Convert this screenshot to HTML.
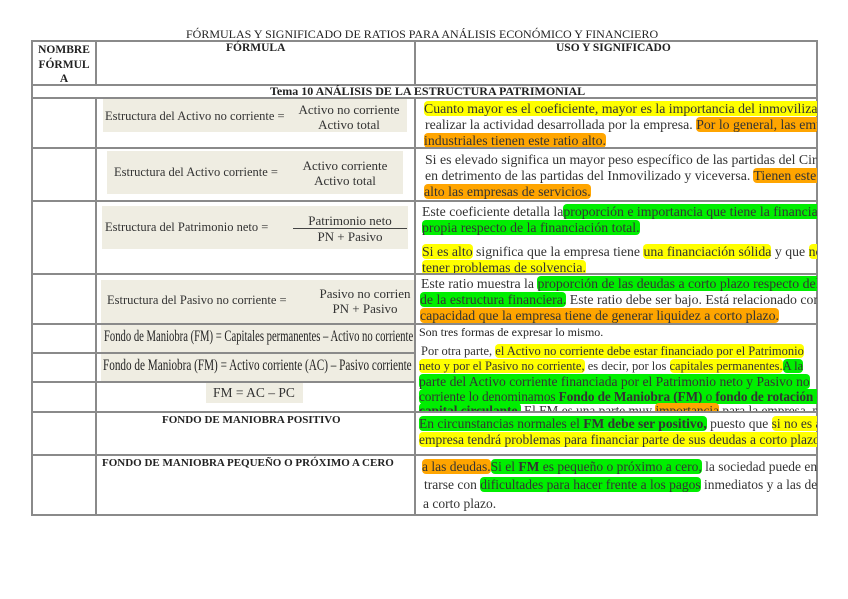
<!DOCTYPE html>
<html><head><meta charset="utf-8"><style>
body{margin:0;width:848px;height:599px;background:#fff;position:relative;overflow:hidden;font-family:"Liberation Serif",serif;color:#222}
.v{position:absolute;width:2px;background:#8a8a8a}
.h{position:absolute;height:2px;background:#8a8a8a}
.t{position:absolute;white-space:nowrap}
.clip{position:absolute;left:416px;width:401px;overflow:hidden}
.l{position:absolute;white-space:nowrap;font-size:13.8px;color:#333}
.y{background:#ffff00;border-radius:4px}
.o{background:#ffa500;border-radius:4px}
.g{background:#00ee00;border-radius:4px}
.bx{position:absolute;background:#efede2}
.f{position:absolute;font-size:12.5px;color:#333;white-space:nowrap}
.fr{position:absolute;font-size:13px;color:#333;text-align:center;white-space:nowrap;line-height:15px}
.c{font-size:16px;color:#222;transform-origin:0 0}
</style></head><body>
<div class="t" style="left:186px;top:27px;font-size:12px">FÓRMULAS Y SIGNIFICADO DE RATIOS PARA ANÁLISIS ECONÓMICO Y FINANCIERO</div>
<div class="bx" style="left:101px;top:280px;width:313px;height:101px"></div>
<div class="v" style="left:31px;top:40px;height:476px"></div>
<div class="v" style="left:95px;top:40px;height:44px"></div>
<div class="v" style="left:95px;top:98px;height:418px"></div>
<div class="v" style="left:414px;top:40px;height:44px"></div>
<div class="v" style="left:414px;top:98px;height:418px"></div>
<div class="v" style="left:816px;top:40px;height:476px"></div>
<div class="h" style="left:31px;top:40px;width:787px"></div>
<div class="h" style="left:31px;top:84px;width:787px"></div>
<div class="h" style="left:31px;top:97px;width:787px"></div>
<div class="h" style="left:31px;top:147px;width:787px"></div>
<div class="h" style="left:31px;top:200px;width:787px"></div>
<div class="h" style="left:31px;top:273px;width:787px"></div>
<div class="h" style="left:31px;top:323px;width:787px"></div>
<div class="h" style="left:31px;top:352px;width:385px"></div>
<div class="h" style="left:31px;top:381px;width:385px"></div>
<div class="h" style="left:31px;top:411px;width:787px"></div>
<div class="h" style="left:31px;top:454px;width:787px"></div>
<div class="h" style="left:31px;top:514px;width:787px"></div>
<div class="t" style="left:33px;top:43px;width:62px;text-align:center;font-size:11.5px;font-weight:bold;line-height:14.5px">NOMBRE<br>FÓRMUL<br>A</div>
<div class="t" style="left:226px;top:42px;font-size:11.5px;font-weight:bold">FÓRMULA</div>
<div class="t" style="left:556px;top:42px;font-size:11.5px;font-weight:bold">USO Y SIGNIFICADO</div>
<div class="t" style="left:270px;top:84px;font-size:12px;font-weight:bold">Tema 10 ANÁLISIS DE LA ESTRUCTURA PATRIMONIAL</div>
<div class="bx" style="left:103px;top:99px;width:304px;height:33px"></div>
<div class="f" style="left:105px;top:109px">Estructura del Activo no corriente =</div>
<div class="fr" style="left:290px;top:102px;width:118px">Activo no corriente<br>Activo total</div>
<div class="bx" style="left:107px;top:151px;width:296px;height:43px"></div>
<div class="f" style="left:114px;top:165px">Estructura del Activo corriente =</div>
<div class="fr" style="left:290px;top:158px;width:110px">Activo corriente<br>Activo total</div>
<div class="bx" style="left:102px;top:206px;width:306px;height:43px"></div>
<div class="f" style="left:105px;top:220px">Estructura del Patrimonio neto =</div>
<div class="fr" style="left:293px;top:213px;width:114px">Patrimonio neto<br><span style="display:block;border-top:1.5px solid #444">PN + Pasivo</span></div>
<div class="f" style="left:107px;top:293px">Estructura del Pasivo no corriente =</div>
<div class="fr" style="left:316px;top:286px;width:98px;overflow:hidden">Pasivo no corrien<br>PN + Pasivo</div>
<div style="position:absolute;left:101px;top:326px;width:313px;height:25px;overflow:hidden"><div class="t c" style="left:3px;top:2px;transform:scaleX(0.665)">Fondo de Maniobra (FM) = Capitales permanentes – Activo no corriente</div></div>
<div style="position:absolute;left:101px;top:355px;width:313px;height:25px;overflow:hidden"><div class="t c" style="left:2px;top:2px;transform:scaleX(0.70)">Fondo de Maniobra (FM) = Activo corriente (AC) – Pasivo corriente</div></div>
<div class="bx" style="left:206px;top:383px;width:97px;height:20px"></div>
<div class="f" style="left:213px;top:385px;font-size:13.5px">FM = AC – PC</div>
<div class="t" style="left:162px;top:414px;font-size:11px;font-weight:bold">FONDO DE MANIOBRA POSITIVO</div>
<div class="t" style="left:102px;top:457px;font-size:11px;font-weight:bold">FONDO DE MANIOBRA PEQUEÑO O PRÓXIMO A CERO</div>
<div class="clip" style="top:99px;height:48px">
<div class="l" style="left:8px;top:2px"><span class="y">Cuanto mayor es el coeficiente, mayor es la importancia del inmovilizado en</span></div>
<div class="l" style="left:9px;top:18px">realizar la actividad desarrollada por la empresa. <span class="o">Por lo general, las empresas</span></div>
<div class="l" style="left:8px;top:34px"><span class="o">industriales tienen este ratio alto.</span></div>
</div>
<div class="clip" style="top:149px;height:51px">
<div class="l" style="left:9px;top:3px">Si es elevado significa un mayor peso específico de las partidas del Circulante</div>
<div class="l" style="left:9px;top:19px">en detrimento de las partidas del Inmovilizado y viceversa. <span class="o">Tienen este ratio</span></div>
<div class="l" style="left:8px;top:35px"><span class="o">alto las empresas de servicios.</span></div>
</div>
<div class="clip" style="top:202px;height:71px">
<div class="l" style="left:6px;top:2px">Este coeficiente detalla la<span class="g">proporción e importancia que tiene la financiación</span></div>
<div class="l" style="left:6px;top:18px"><span class="g">propia respecto de la financiación total.</span></div>
<div class="l" style="left:6px;top:42px"><span class="y">Si es alto</span> significa que la empresa tiene <span class="y">una financiación sólida</span> y que <span class="y">no va a</span></div>
<div class="l" style="left:6px;top:58px"><span class="y">tener problemas de solvencia.</span></div>
</div>
<div class="clip" style="top:275px;height:48px">
<div class="l" style="left:5px;top:1px">Este ratio muestra la <span class="g">proporción de las deudas a corto plazo respecto del total</span></div>
<div class="l" style="left:4px;top:17px"><span class="g">de la estructura financiera.</span> Este ratio debe ser bajo. Está relacionado con la</div>
<div class="l" style="left:4px;top:33px"><span class="o">capacidad que la empresa tiene de generar liquidez a corto plazo.</span></div>
</div>
<div class="clip" style="top:325px;height:86px">
<div class="l" style="left:3px;top:0px;font-size:12px;color:#222">Son tres formas de expresar lo mismo.</div>
<div class="l" style="left:5px;top:19px;font-size:12.5px">Por otra parte, <span class="y">el Activo no corriente debe estar financiado por el Patrimonio</span></div>
<div class="l" style="left:3px;top:34px;font-size:12.5px"><span class="y">neto y por el Pasivo no corriente,</span> es decir, por los <span class="y">capitales permanentes.</span><span class="g">A la</span></div>
<div class="l" style="left:3px;top:49px;font-size:13.6px"><span class="g">parte del Activo corriente financiada por el Patrimonio neto y Pasivo no</span></div>
<div class="l" style="left:3px;top:64px;font-size:13.3px;letter-spacing:-0.1px"><span class="g">corriente lo denominamos <b>Fondo de Maniobra (FM)</b> o <b>fondo de rotación</b> o</span></div>
<div class="l" style="left:3px;top:78px;font-size:13.3px"><span class="g"><b>capital circulante.</b></span> El FM es una parte muy <span class="o">importancia</span> para la empresa, pues</div>
</div>
<div class="clip" style="top:413px;height:41px">
<div class="l" style="left:3px;top:3px;font-size:13.5px"><span class="g">En circunstancias normales el <b>FM debe ser positivo,</b></span> puesto que <span class="y">si no es así la</span></div>
<div class="l" style="left:3px;top:19px;font-size:13.5px"><span class="y">empresa tendrá problemas para financiar parte de sus deudas a corto plazo.</span></div>
</div>
<div class="clip" style="top:456px;height:58px">
<div class="l" style="left:6px;top:3px;font-size:13.5px"><span class="o">a las deudas.</span><span class="g">Si el <b>FM</b> es pequeño o próximo a cero,</span> la sociedad puede encon-</div>
<div class="l" style="left:8px;top:21px;font-size:13.5px">trarse con <span class="g">dificultades para hacer frente a los pagos</span> inmediatos y a las deudas</div>
<div class="l" style="left:7px;top:40px;font-size:13.5px">a corto plazo.</div>
</div>
</body></html>
